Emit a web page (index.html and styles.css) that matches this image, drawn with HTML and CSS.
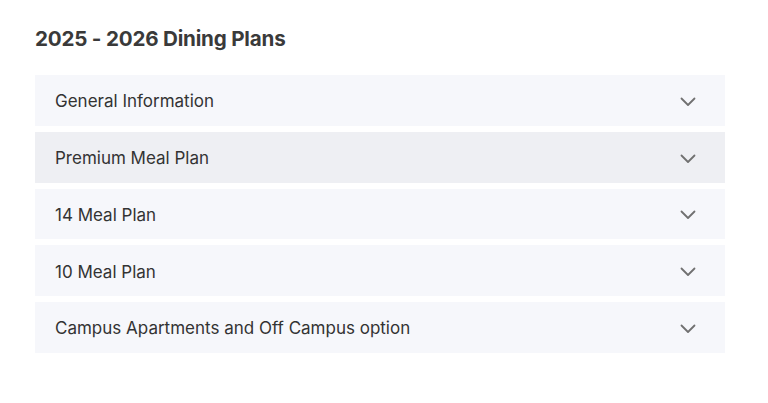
FILE: index.html
```html
<!DOCTYPE html>
<html>
<head>
<meta charset="utf-8">
<link rel="stylesheet" href="styles.css">
</head>
<body>
<main class="page">
  <h2 class="title">2025 - 2026 Dining Plans</h2>
  <div class="accordion">
    <div class="item"><span class="label">General Information</span><svg class="chev" viewBox="0 0 16 10"><path d="M1.5 1.5 L8 8 L14.5 1.5"/></svg></div>
    <div class="item item-hover"><span class="label">Premium Meal Plan</span><svg class="chev" viewBox="0 0 16 10"><path d="M1.5 1.5 L8 8 L14.5 1.5"/></svg></div>
    <div class="item"><span class="label">14 Meal Plan</span><svg class="chev" viewBox="0 0 16 10"><path d="M1.5 1.5 L8 8 L14.5 1.5"/></svg></div>
    <div class="item"><span class="label">10 Meal Plan</span><svg class="chev" viewBox="0 0 16 10"><path d="M1.5 1.5 L8 8 L14.5 1.5"/></svg></div>
    <div class="item"><span class="label">Campus Apartments and Off Campus option</span><svg class="chev" viewBox="0 0 16 10"><path d="M1.5 1.5 L8 8 L14.5 1.5"/></svg></div>
  </div>
</main>
</body>
</html>
```
FILE: styles.css
```css
html, body { margin: 0; padding: 0; background: #fff; }
body { font-family: Inter, "Open Sans", sans-serif; color: #333; }
.page { padding: 27px 43px 0 35px; }
.title { margin: 0 0 24px; font-size: 20.6px; font-weight: 700; line-height: 24px; color: #3a3a3a; letter-spacing: -0.2px; }
.accordion { display: flex; flex-direction: column; gap: 6px; }
.item { height: 50.75px; background: #f6f7fb; display: flex; align-items: center; justify-content: space-between; padding: 2px 29px 0 20px; box-sizing: border-box; }
.item-hover { background: #eeeff3; }
.label { font-size: 17px; color: #333; }
.chev { width: 16px; height: 10px; margin-top: 1px; fill: none; stroke: #707070; stroke-width: 1.8; stroke-linecap: round; stroke-linejoin: round; }
```
